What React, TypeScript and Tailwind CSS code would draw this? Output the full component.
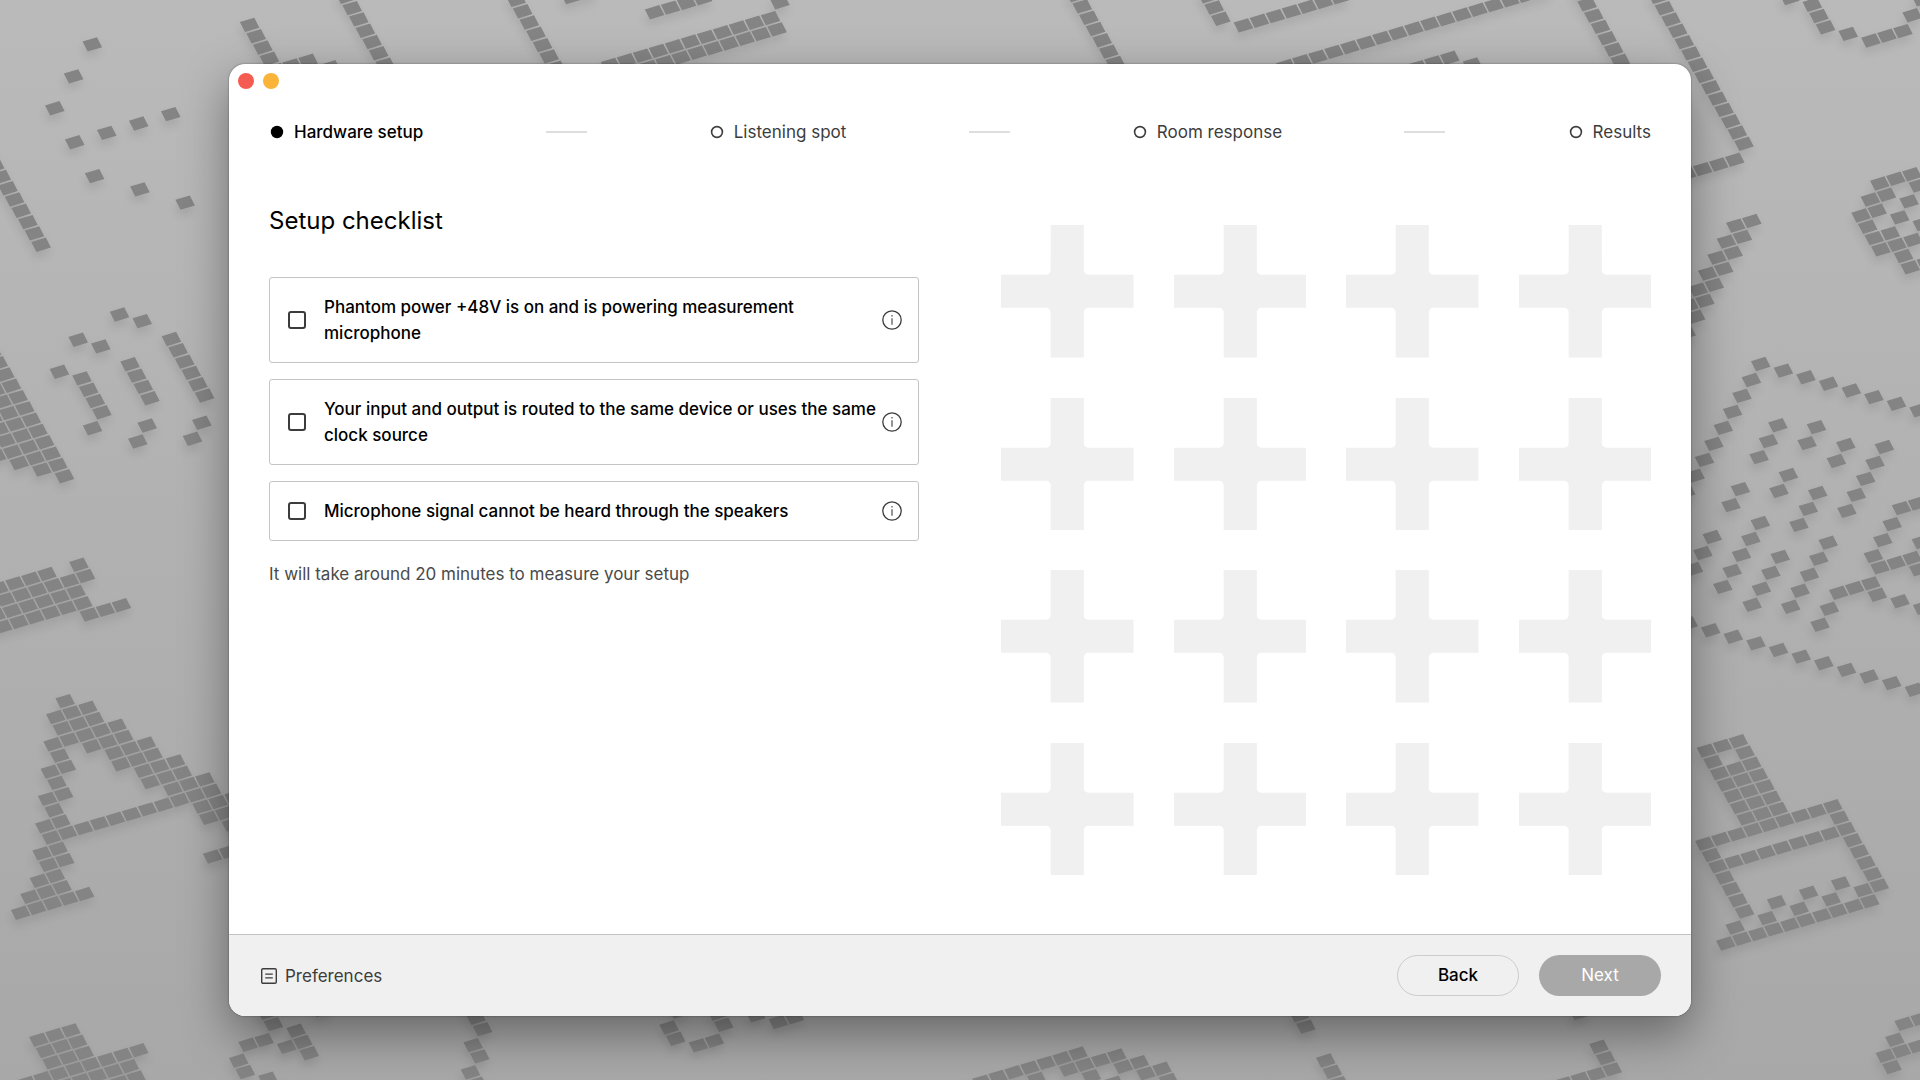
import React, { useState } from 'react';

type Direction = 'a' | 'b' | 'c' | 'd';
type Run = [x: number, y: number, direction?: Direction, count?: number];

// The backdrop tiles sit on one slanted lattice with these two steps
const STEP_A = { x: 16, y: -4.68 };
const STEP_B = { x: 6.63, y: 11.3 };
const ORIGIN = { x: 92.3, y: 44.4 };

// a = along the row, b = down the column, c and d = the two diagonals
const DIRECTIONS: Record<Direction, [number, number]> = {
  a: [1, 0],
  b: [0, 1],
  c: [-1, 1],
  d: [1, 1],
};

const RUNS: Run[] = [
  // left edge, top
  [92, 44], [74, 76], [55, 108], [75, 143], [107, 133], [139, 124], [171, 114],
  [95, 176], [140, 189], [185, 203],
  [-12, 155, 'b', 9],
  [-8, 352, 'b', 12], [-11, 379, 'b', 9], [-7, 418, 'b', 5], [-10, 445, 'b', 2],
  [119, 314], [142, 321], [78, 340], [101, 347], [60, 372],
  [80, 378, 'b', 4], [92, 428],
  [130, 365, 'b', 4], [147, 426], [138, 441],
  [171, 339, 'b', 6], [202, 423], [192, 440],
  // left edge, middle
  [79, 565, 'b', 2],
  [-17, 593, 'a', 5], [-10, 603, 'a', 6], [-3, 615, 'a', 6], [-12, 631, 'a', 7],
  [89, 614, 'a', 3],
  [65, 701, 'b', 5], [88, 707, 'b', 6], [56, 718, 'b', 3], [53, 745, 'b', 3],
  [50, 771, 'b', 3], [48, 799, 'b', 4], [45, 826, 'b', 4], [42, 854, 'b', 5],
  [39, 881, 'b', 3], [30, 896, 'b', 2], [21, 913], [85, 893],
  [117, 726, 'b', 6], [146, 744, 'b', 6], [176, 762, 'b', 6], [205, 780, 'b', 6],
  [234, 798, 'b', 5], [83, 829, 'a', 6], [212, 857, 'a', 3],
  // bottom edge
  [39, 1040, 'b', 5], [55, 1035, 'b', 5], [71, 1031, 'b', 5], [107, 1060, 'b', 3],
  [123, 1056, 'b', 3], [139, 1051], [42, 1077], [27, 1081],
  [267, 1014, 'b', 2], [296, 1031, 'b', 3], [286, 1047], [247, 1045, 'a', 2],
  [238, 1061, 'b', 2], [268, 1077], [320, 1014],
  [469, 1005, 'b', 3], [473, 1046, 'b', 2], [470, 1072, 'b', 2],
  [668, 1028, 'b', 2], [678, 1014], [717, 1013, 'b', 2], [698, 1046, 'a', 2],
  [755, 1016], [778, 1022, 'a', 2],
  [982, 1081, 'a', 7], [1069, 1069, 'a', 4], [1091, 1076], [1123, 1067, 'a', 2],
  [1145, 1073, 'a', 2], [1168, 1079], [1034, 1076], [1112, 1081],
  [1298, 1015, 'b', 2], [1325, 1060, 'b', 3],
  [1579, 1016], [1599, 1047, 'b', 3], [1562, 1083, 'a', 3],
  [1903, 1025, 'a', 2], [1893, 1041], [1885, 1057, 'a', 3], [1891, 1068],
  // top edge
  [249, 24, 'b', 6], [346, -2, 'b', 7], [290, 63, 'a', 2], [331, 63],
  [517, 0, 'b', 7], [572, 2, 'a', 2], [655, 13, 'a', 4], [782, 3],
  [607, 64, 'a', 11], [649, 66, 'a', 9],
  [1074, -5, 'b', 8], [1207, -5, 'b', 3], [1243, 27, 'a', 7], [1284, 65, 'a', 17],
  [1579, -7, 'b', 8], [1657, -3, 'b', 14], [1416, 66, 'a', 3], [1471, 62],
  // right edge, top
  [1686, 173, 'a', 4],
  [1735, 225, 'a', 2], [1726, 241, 'a', 2], [1717, 257, 'a', 2], [1707, 273, 'a', 2],
  [1698, 289, 'a', 2], [1688, 306, 'a', 2], [1679, 322, 'a', 2], [1686, 333],
  [1790, 0], [1811, 5, 'b', 3], [1847, 34], [1870, 40, 'a', 3], [1911, 14], [1920, 0],
  [1879, 184, 'a', 3], [1869, 199, 'a', 2], [1860, 216, 'b', 4], [1876, 211],
  [1899, 217], [1908, 201], [1917, 186], [1889, 234, 'b', 4], [1912, 240],
  [1918, 225], [1925, 263],
  // right edge, middle
  [1760, 364, 'd', 9], [1760, 364, 'c', 10],
  [1777, 425, 'c', 3], [1816, 427, 'c', 2], [1845, 445, 'c', 2], [1883, 447, 'c', 5],
  [1787, 475, 'c', 2], [1817, 493, 'c', 3], [1740, 489, 'c', 2], [1759, 523, 'c', 5],
  [1712, 538, 'c', 3], [1901, 508, 'a', 2], [1901, 508, 'c', 4],
  [1779, 557, 'c', 4], [1827, 543, 'c', 5], [1879, 568, 'a', 3], [1917, 569],
  [1918, 542], [1838, 593, 'a', 3], [1876, 595], [1899, 602, 'd', 2],
  [1828, 609, 'c', 2], [1687, 624, 'd', 12],
  // right edge, bottom
  [1706, 751, 'a', 3], [1712, 763, 'b', 6], [1735, 769, 'b', 6], [1737, 742, 'b', 8],
  [1704, 844, 'a', 9], [1711, 856, 'b', 6], [1733, 863, 'a', 7], [1839, 818, 'b', 7],
  [1862, 891], [1725, 944, 'a', 10], [1734, 929], [1766, 918], [1798, 909],
  [1830, 900], [1776, 903], [1808, 893], [1840, 884],
];

const tilesPath = () => {
  const det = STEP_A.x * STEP_B.y - STEP_B.x * STEP_A.y;
  const tiles = new Set<string>();

  RUNS.forEach(([x, y, direction = 'a', count = 1]) => {
    const dx = x - ORIGIN.x;
    const dy = y - ORIGIN.y;
    const i = Math.round((STEP_B.y * dx - STEP_B.x * dy) / det);
    const j = Math.round((STEP_A.x * dy - STEP_A.y * dx) / det);
    const [di, dj] = DIRECTIONS[direction];
    for (let n = 0; n < count; n++) {
      const u = i + di * n;
      const v = j + dj * n;
      const cx = ORIGIN.x + u * STEP_A.x + v * STEP_B.x;
      const cy = ORIGIN.y + u * STEP_A.y + v * STEP_B.y;
      tiles.add(`M${cx.toFixed(1)} ${cy.toFixed(1)}m-9.8-2.8l14.5-4.4 5.1 10-14.4 4.4z`);
    }
  });

  return Array.from(tiles).join('');
};

const TILES = tilesPath();

const Backdrop: React.FC = () => (
  <svg
    className="absolute inset-0 w-full h-full"
    viewBox="0 0 1920 1080"
    preserveAspectRatio="xMidYMid slice"
    aria-hidden="true"
  >
    <path
      d={TILES}
      fill="#848484"
      className="drop-shadow-[-1px_6px_4px_rgba(0,0,0,0.09)]"
    />
  </svg>
);

const StepIcon: React.FC<{ active: boolean }> = ({ active }) => (
  <svg className="w-4 h-4" viewBox="0 0 16 16" aria-hidden="true">
    {active ? (
      <circle cx="8" cy="8" r="6.2" fill="#000" />
    ) : (
      <circle cx="8" cy="8" r="5.4" fill="none" stroke="#3c3c3c" strokeWidth="1.6" />
    )}
  </svg>
);

const InfoIcon: React.FC = () => (
  <svg className="w-5 h-5" viewBox="0 0 20 20" fill="none" stroke="#3c3c3c" aria-hidden="true">
    <circle cx="10" cy="10" r="9.2" strokeWidth="1.3" />
    <path d="M10 8.2v6.6" strokeWidth="1.1" />
    <path d="M10 4.9v1.5" strokeWidth="1.1" />
  </svg>
);

const PreferencesIcon: React.FC = () => (
  <svg className="w-4 h-4" viewBox="0 0 16 16" fill="none" stroke="#3c3c3c" aria-hidden="true">
    <rect x="0.7" y="0.7" width="14.6" height="14.6" rx="1.4" strokeWidth="1.4" />
    <path d="M4.2 6.1h7.6M4.2 9.9h7.6" strokeWidth="1.4" />
  </svg>
);

const Cross: React.FC = () => (
  <svg className="w-full" viewBox="0 0 132 132" fill="#f0f0f0" aria-hidden="true">
    <path d="M49.5 0h33v45a4.5 4.5 0 0 0 4.5 4.5h45v33h-45a4.5 4.5 0 0 0-4.5 4.5v45h-33v-45a4.5 4.5 0 0 0-4.5-4.5h-45v-33h45a4.5 4.5 0 0 0 4.5-4.5z" />
  </svg>
);

const steps = ['Hardware setup', 'Listening spot', 'Room response', 'Results'];

const checklist = [
  { id: 'phantom', label: 'Phantom power +48V is on and is powering measurement microphone' },
  { id: 'routing', label: 'Your input and output is routed to the same device or uses the same clock source' },
  { id: 'feedback', label: 'Microphone signal cannot be heard through the speakers' },
];

const Stepper: React.FC<{ current: number }> = ({ current }) => (
  <ol className="flex items-center justify-between px-10">
    {steps.map((step, index) => (
      <React.Fragment key={step}>
        {index > 0 && <li className="w-[41px] h-0.5 bg-[#dedede]" aria-hidden="true" />}
        <li
          className={`flex items-center gap-[9px] text-[17px] leading-6 ${
            index === current ? 'font-medium text-black' : 'text-[#3c3c3c]'
          }`}
          aria-current={index === current ? 'step' : undefined}
        >
          <StepIcon active={index === current} />
          {step}
        </li>
      </React.Fragment>
    ))}
  </ol>
);

const App: React.FC = () => {
  const [checked, setChecked] = useState<Record<string, boolean>>({});

  const toggle = (id: string) => setChecked((prev) => ({ ...prev, [id]: !prev[id] }));

  return (
    <div className="relative min-h-screen flex items-center justify-center overflow-hidden bg-linear-to-b from-[#bababa] to-[#a8a8a8] font-['Inter',sans-serif]">
      <Backdrop />

      <div className="relative w-full max-w-[1462px] rounded-2xl overflow-hidden bg-white shadow-[0_0_2px_rgba(0,0,0,0.45),0_18px_48px_rgba(0,0,0,0.4)]">
        {/* Title bar */}
        <div className="flex gap-[9px] px-[9px] pt-[9px] pb-[31px]">
          <button type="button" aria-label="Close" className="w-4 h-4 rounded-full bg-[#f45c51]" />
          <button type="button" aria-label="Minimize" className="w-4 h-4 rounded-full bg-[#fab43a]" />
        </div>

        <Stepper current={0} />

        <main className="grid grid-cols-2 gap-[82px] px-10 pt-[61px] pb-[59px]">
          <section>
            <h1 className="text-2xl leading-8 text-black mb-10">Setup checklist</h1>
            <ul className="space-y-4">
              {checklist.map(({ id, label }) => (
                <li
                  key={id}
                  className="flex items-center border border-[#c4c4c4] rounded-[3px] px-4 py-4"
                >
                  <input
                    id={id}
                    type="checkbox"
                    checked={!!checked[id]}
                    onChange={() => toggle(id)}
                    className="appearance-none shrink-0 w-[18px] h-[18px] ml-0.5 rounded-[3px] border-2 border-[#3c3c3c] checked:bg-black"
                  />
                  <label
                    htmlFor={id}
                    className="flex-1 pl-[18px] text-[17px] leading-[26px] font-medium text-black"
                  >
                    {label}
                  </label>
                  <button type="button" aria-label="More information">
                    <InfoIcon />
                  </button>
                </li>
              ))}
            </ul>
            <p className="mt-5 text-[17px] leading-[26px] text-[#4a4a4a]">
              It will take around 20 minutes to measure your setup
            </p>
          </section>

          <div className="grid grid-cols-4 gap-10 content-start pt-5">
            {Array.from({ length: 16 }, (_, index) => (
              <Cross key={index} />
            ))}
          </div>
        </main>

        {/* Footer */}
        <footer className="flex items-center justify-between border-t border-[#c4c4c4] bg-[#f0f0f0] pl-8 pr-[30px] py-5">
          <button type="button" className="flex items-center gap-2 text-[17px] leading-6 text-[#3c3c3c]">
            <PreferencesIcon />
            Preferences
          </button>
          <div className="flex gap-5">
            <button
              type="button"
              className="w-[122px] h-[41px] rounded-full border border-[#cccccc] text-[17px] font-medium text-black"
            >
              Back
            </button>
            <button
              type="button"
              className="w-[122px] h-[41px] rounded-full bg-[#a8a8a8] text-[17px] text-white"
            >
              Next
            </button>
          </div>
        </footer>
      </div>
    </div>
  );
};

export default App;
